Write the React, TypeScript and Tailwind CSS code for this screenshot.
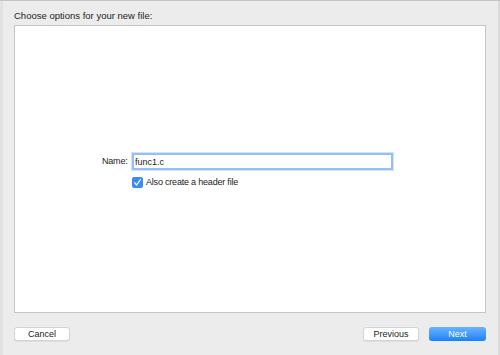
import { useState } from "react";

export default function App() {
  const [name, setName] = useState("func1.c");
  const [header, setHeader] = useState(true);

  return (
    <div
      className="h-[355px] w-[500px] border-t border-[#c4c4c4] bg-[#ececec] text-[9px] text-[#222]"
      style={{ fontFamily: '"Liberation Sans", Arial, sans-serif' }}
    >
      <div className="flex h-full flex-col border-l-[3px] border-r-[2px] border-l-[#e2e2e2] border-r-[#dadada] pl-[11px] pr-[12px] pt-[9px]">
        <p className="h-[11px] text-[9.5px] leading-[11px]">Choose options for your new file:</p>

        <div className="mt-[4px] flex h-[288px] flex-col items-start border border-[#c6c6c6] bg-white pl-[87px] pt-[127px]">
          <div className="flex items-center gap-[6px]">
            <label className="w-[24px] whitespace-nowrap text-right tracking-[-0.2px]">Name:</label>
            <input
              value={name}
              onChange={(e) => setName(e.target.value)}
              className="h-[17px] w-[261px] border-2 border-[#94c0f6] px-[1px] text-[9px] text-[#222] shadow-[0_0_0_1px_#cfe3fb] outline-none"
            />
          </div>
          <label className="ml-[30px] mt-[6px] flex items-center gap-[3px]">
            <button
              type="button"
              onClick={() => setHeader(!header)}
              className={`flex h-[11px] w-[11px] items-center justify-center rounded-[2px] ${header ? "bg-[#3a8cf5]" : "border border-[#b0b0b0] bg-white"}`}
            >
              {header ? (
                <svg width="9" height="9" viewBox="0 0 9 9">
                  <path d="M1.8 4.8 L3.7 7 L7.4 1.5" fill="none" stroke="white" strokeWidth="1.3" strokeLinecap="round" strokeLinejoin="round" />
                </svg>
              ) : null}
            </button>
            <span className="tracking-[-0.2px]">Also create a header file</span>
          </label>
        </div>

        <div className="mt-[14px] flex items-center justify-between">
          <button type="button" className="h-[14px] w-[56px] rounded-[3px] border border-[#d4d4d4] bg-white text-[9px] leading-[12px] shadow-[0_0.5px_0.5px_rgba(0,0,0,0.12)]">
            Cancel
          </button>
          <div className="flex gap-[10px]">
            <button type="button" className="h-[14px] w-[56px] rounded-[3px] border border-[#d4d4d4] bg-white text-[9px] leading-[12px] shadow-[0_0.5px_0.5px_rgba(0,0,0,0.12)]">
              Previous
            </button>
            <button type="button" className="h-[14px] w-[57px] rounded-[3px] bg-gradient-to-b from-[#6ab2fa] to-[#1580fb] text-[9px] leading-[14px] text-white">
              Next
            </button>
          </div>
        </div>
      </div>
    </div>
  );
}
